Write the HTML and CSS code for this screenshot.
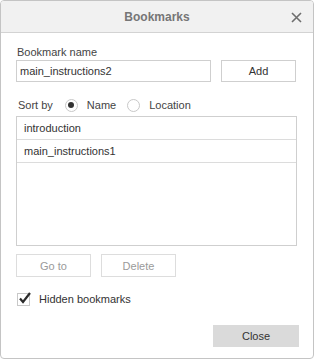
FILE: index.html
```html
<!DOCTYPE html>
<html>
<head>
<meta charset="utf-8">
<link rel="stylesheet" href="styles.css">
</head>
<body>
<div class="dialog">
  <div class="header">
    <span></span>
    <span class="title">Bookmarks</span>
    <span class="close-x">
      <svg width="11" height="11" viewBox="0 0 11 11"><path d="M1 1L10 10M10 1L1 10" stroke="#6e6e6e" stroke-width="1.6" fill="none"/></svg>
    </span>
  </div>
  <div class="body">
    <div class="label">Bookmark name</div>
    <div class="name-row">
      <div class="input">main_instructions2</div>
      <div class="btn add">Add</div>
    </div>
    <div class="sort-row">
      <span>Sort by</span>
      <span class="radio checked r1"></span>
      <span class="rlabel1">Name</span>
      <span class="radio r2"></span>
      <span class="rlabel2">Location</span>
    </div>
    <div class="list">
      <div class="item">introduction</div>
      <div class="item">main_instructions1</div>
    </div>
    <div class="btn-row">
      <div class="btn disabled">Go to</div>
      <div class="btn disabled">Delete</div>
    </div>
    <div class="check-row">
      <span class="checkbox">
        <svg width="15" height="15" viewBox="0 0 15 15"><path d="M3 7.5L6 11L13 2" stroke="#2b2b2b" stroke-width="2.2" fill="none"/></svg>
      </span>
      <span class="clabel">Hidden bookmarks</span>
    </div>
    <div class="footer">
      <div class="btn close">Close</div>
    </div>
  </div>
</div>
</body>
</html>
```
FILE: styles.css
```css
html, body {
  margin: 0;
  padding: 0;
  background: #fff;
}
.dialog {
  width: 314px;
  height: 359px;
  box-sizing: border-box;
  border: 1px solid #c4c4c4;
  border-radius: 4px;
  overflow: hidden;
  display: flex;
  flex-direction: column;
  font-family: "Liberation Sans", Arial, sans-serif;
  font-size: 11px;
  color: #444;
  background: #fff;
}
.header {
  height: 31px;
  flex: none;
  background: #f1f1f1;
  border-bottom: 1px solid #d3d3d3;
  display: grid;
  grid-template-columns: 1fr auto 1fr;
  align-items: center;
}
.title {
  font-weight: bold;
  font-size: 12px;
  color: #767676;
}
.close-x {
  justify-self: end;
  margin-right: 11px;
  display: flex;
  margin-top: 1px;
}
.body {
  flex: 1;
  display: flex;
  flex-direction: column;
  padding: 12px 16px 11px 15px;
}
.label {
  line-height: 14px;
  height: 14px;
  padding-left: 1px;
}
.name-row {
  display: flex;
  margin-top: 1px;
  gap: 10px;
}
.input {
  width: 195px;
  height: 22px;
  box-sizing: border-box;
  border: 1px solid #cfcfcf;
  line-height: 20px;
  padding-left: 3px;
  color: #333;
}
.btn {
  height: 22px;
  box-sizing: border-box;
  border: 1px solid #cfcfcf;
  display: flex;
  align-items: center;
  justify-content: center;
  color: #333;
  background: #fff;
}
.add {
  width: 75px;
}
.sort-row {
  margin-top: 13px;
  height: 20px;
  display: flex;
  align-items: center;
  padding-left: 2px;
}
.radio {
  width: 13px;
  height: 13px;
  box-sizing: border-box;
  border: 1px solid #c8c8c8;
  border-radius: 50%;
  display: flex;
  align-items: center;
  justify-content: center;
  background: #fff;
}
.radio.checked::after {
  content: "";
  width: 6px;
  height: 6px;
  border-radius: 50%;
  background: #333;
}
.r1 { margin-left: 12px; }
.rlabel1 { margin-left: 9px; }
.r2 { margin-left: 11px; }
.rlabel2 { margin-left: 9px; }
.list {
  margin-top: 1px;
  height: 130px;
  box-sizing: border-box;
  border: 1px solid #cfcfcf;
}
.item {
  height: 22px;
  line-height: 22px;
  border-bottom: 1px solid #dcdcdc;
  padding-left: 7px;
  color: #333;
}
.btn-row {
  margin-top: 8px;
  display: flex;
  gap: 10px;
}
.btn.disabled {
  width: 75px;
  height: 23px;
  color: #9a9a9a;
  border-color: #dddddd;
}
.check-row {
  margin-top: 14px;
  height: 16px;
  display: flex;
  align-items: center;
}
.checkbox {
  width: 13px;
  height: 13px;
  box-sizing: border-box;
  border: 1px solid #c8c8c8;
  position: relative;
  margin-left: 1px;
}
.checkbox svg {
  position: absolute;
  left: -1px;
  top: -3px;
}
.clabel {
  margin-left: 9px;
  color: #333;
}
.footer {
  margin-top: auto;
  display: flex;
  justify-content: flex-end;
  margin-right: -2px;
}
.btn.close {
  width: 86px;
  height: 22px;
  background: #dadada;
  border-color: #dadada;
  color: #333;
}
```
